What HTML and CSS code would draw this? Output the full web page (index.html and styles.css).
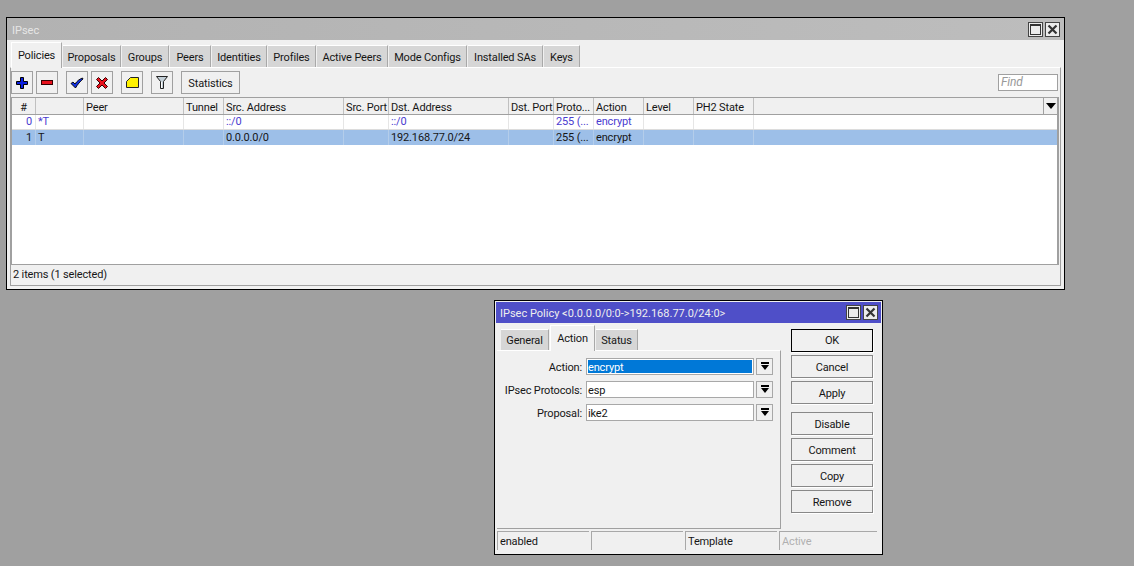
FILE: index.html
```html
<!DOCTYPE html>
<html lang="en">
<head>
<meta charset="utf-8">
<title>IPsec</title>
<link rel="stylesheet" href="styles.css">
</head>
<body>
<main class="desktop">
  <section class="window main-window">
    <header class="titlebar inactive">
      <span class="title">IPsec</span>
      <span class="win-btns">
        <span class="win-btn"><svg width="13" height="13" viewBox="0 0 13 13"><rect x="1.500" y="2.500" width="10" height="9" fill="none" stroke="#333"/><rect x="1" y="1" width="11" height="2" fill="#333"/></svg></span>
        <span class="win-btn"><svg width="13" height="13" viewBox="0 0 13 13"><path d="M2.500 2.500l8 8M10.500 2.500l-8 8" stroke="#333" stroke-width="2.200"/></svg></span>
      </span>
    </header>
    <nav class="tabs main-tabs">
      <span class="tab active t51">Policies</span>
      <span class="tab t58">Proposals</span>
      <span class="tab t47">Groups</span>
      <span class="tab t41">Peers</span>
      <span class="tab t55">Identities</span>
      <span class="tab t48">Profiles</span>
      <span class="tab t71">Active Peers</span>
      <span class="tab t78">Mode Configs</span>
      <span class="tab t75">Installed SAs</span>
      <span class="tab t36">Keys</span>
    </nav>
    <div class="panel">
      <div class="toolbar">
        <button class="tool"><svg width="14" height="14" viewBox="0 0 14 14"><path d="M5.500 1.500h3v4h4v3h-4v4h-3v-4h-4v-3h4z" fill="#0a1ee0" stroke="#000"/></svg></button>
        <button class="tool gap3"><svg width="14" height="14" viewBox="0 0 14 14"><rect x="1.500" y="4.500" width="11" height="4" fill="#e8101c" stroke="#300"/></svg></button>
        <button class="tool gap8"><svg width="14" height="14" viewBox="0 0 14 14"><path d="M1 7.500l2-1.500 2 2C7 5 9.500 3 12.500 2l.5 1C10 5.500 7.500 8.500 5.500 12z" fill="#1030e0" stroke="#000" stroke-width=".9"/></svg></button>
        <button class="tool gap3"><svg width="14" height="14" viewBox="0 0 14 14"><path d="M1.500 3.500l2-2 3.500 3.500 3.500-3.500 2 2-3.500 3.500 3.500 3.500-2 2-3.500-3.500-3.500 3.500-2-2 3.500-3.500z" fill="#e8101c" stroke="#300"/></svg></button>
        <button class="tool gap8"><svg width="15" height="14" viewBox="0 0 15 14"><path d="M5.500 1.500h8v10h-12v-6z" fill="#fff200" stroke="#222"/></svg></button>
        <button class="tool gap8"><svg width="14" height="15" viewBox="0 0 14 15"><path d="M1.500 1.500h11l-4 5v7h-3v-7z" fill="#c4d0d8" stroke="#222"/><path d="M6.500 7v6" stroke="#fff"/></svg></button>
        <button class="tool text-tool gap8">Statistics</button>
        <span class="find">Find</span>
      </div>
      <div class="table">
        <div class="row head">
          <span class="num">#</span><span></span><span>Peer</span><span>Tunnel</span><span>Src. Address</span><span>Src. Port</span><span>Dst. Address</span><span>Dst. Port</span><span>Proto...</span><span>Action</span><span>Level</span><span>PH2 State</span><span></span><span class="menu"><svg width="10" height="6" viewBox="0 0 10 6"><path d="M0 0h10L5 6z" fill="#000"/></svg></span>
        </div>
        <div class="row dyn">
          <span class="num">0</span><span>*T</span><span></span><span></span><span>::/0</span><span></span><span>::/0</span><span></span><span>255 (...</span><span>encrypt</span><span></span><span></span><span></span><span></span>
        </div>
        <div class="row sel">
          <span class="num">1</span><span>T</span><span></span><span></span><span>0.0.0.0/0</span><span></span><span>192.168.77.0/24</span><span></span><span>255 (...</span><span>encrypt</span><span></span><span></span><span></span><span></span>
        </div>
      </div>
      <div class="statusbar">2 items (1 selected)</div>
    </div>
  </section>

  <section class="window dialog">
    <header class="titlebar focused">
      <span class="title">IPsec Policy &lt;0.0.0.0/0:0-&gt;192.168.77.0/24:0&gt;</span>
      <span class="win-btns">
        <span class="win-btn"><svg width="13" height="13" viewBox="0 0 13 13"><rect x="1.500" y="2.500" width="10" height="9" fill="none" stroke="#333"/><rect x="1" y="1" width="11" height="2" fill="#333"/></svg></span>
        <span class="win-btn"><svg width="13" height="13" viewBox="0 0 13 13"><path d="M2.500 2.500l8 8M10.500 2.500l-8 8" stroke="#333" stroke-width="2.200"/></svg></span>
      </span>
    </header>
    <div class="dialog-body">
      <div class="dialog-left">
        <nav class="tabs dialog-tabs">
          <span class="tab t48">General</span>
          <span class="tab active t45">Action</span>
          <span class="tab t42">Status</span>
        </nav>
        <div class="form">
          <label class="field"><span class="label">Action:</span><span class="input selected"><span>encrypt</span></span><span class="drop"><svg width="10" height="9" viewBox="0 0 10 9"><path d="M1 0h8v2H1zM1 3h8L5 8z" fill="#000"/></svg></span></label>
          <label class="field"><span class="label">IPsec Protocols:</span><span class="input"><span>esp</span></span><span class="drop"><svg width="10" height="9" viewBox="0 0 10 9"><path d="M1 0h8v2H1zM1 3h8L5 8z" fill="#000"/></svg></span></label>
          <label class="field"><span class="label">Proposal:</span><span class="input"><span>ike2</span></span><span class="drop"><svg width="10" height="9" viewBox="0 0 10 9"><path d="M1 0h8v2H1zM1 3h8L5 8z" fill="#000"/></svg></span></label>
        </div>
      </div>
      <div class="actions">
        <button class="act default">OK</button>
        <button class="act">Cancel</button>
        <button class="act">Apply</button>
        <button class="act sep">Disable</button>
        <button class="act">Comment</button>
        <button class="act">Copy</button>
        <button class="act">Remove</button>
      </div>
    </div>
    <footer class="dialog-status">
      <span class="cell">enabled</span>
      <span class="cell"></span>
      <span class="cell">Template</span>
      <span class="cell muted">Active</span>
    </footer>
  </section>
</main>
</body>
</html>
```
FILE: styles.css
```css
* { box-sizing: border-box; }
html, body { margin: 0; padding: 0; }
body {
  font-family: Roboto, "Liberation Sans", Arial, sans-serif;
  font-size: 11px;
  letter-spacing: -0.15px;
  color: #161616;
}
.desktop {
  position: relative;
  width: 1134px;
  height: 566px;
  background: #a0a0a0;
  overflow: hidden;
}
.window {
  position: absolute;
  background: #f0f0f0;
  border: 1px solid #000;
  display: flex;
  flex-direction: column;
}
.main-window { left: 6px; top: 17px; width: 1059px; height: 273px; }
.dialog { left: 494px; top: 300px; width: 389px; height: 255px; padding: 1px; }

.titlebar {
  display: flex;
  align-items: center;
  justify-content: space-between;
  flex: none;
  letter-spacing: 0;
}
.title { margin-top: 2px; }
.titlebar.inactive {
  height: 22px;
  padding: 0 4px 0 5px;
  background: linear-gradient(90deg, #b2b2b2, #bdbdbd);
  color: #e6e6e6;
}
.titlebar.focused {
  height: 21px;
  padding: 0 3px 0 4px;
  background: #4f4fc8;
  color: #eee;
}
.win-btns { display: flex; gap: 2px; }
.win-btn {
  width: 15px;
  height: 15px;
  background: #ececec;
  border: 1px solid #444;
  display: flex;
  align-items: center;
  justify-content: center;
}

.tabs { display: flex; align-items: flex-end; gap: 1px; flex: none; position: relative; z-index: 1; }
.main-tabs { height: 27px; padding-left: 4px; }
.dialog-tabs { height: 27px; padding-left: 4px; }
.tab {
  height: 22px;
  padding-top: 2px;
  background: #d6d6d6;
  border-top: 1px solid #fff;
  border-right: 1px solid #a8a8a8;
  display: flex;
  align-items: center;
  justify-content: center;
  white-space: nowrap;
}
.dialog-tabs .tab { height: 21px; padding-top: 1px; }
.tabs .tab.active {
  height: 26px;
  margin-bottom: -1px;
  background: #f0f0f0;
  border-top: 1px solid #fff;
  border-left: 1px solid #fff;
  padding: 0;
}
.t36 { width: 36px; } .t41 { width: 41px; } .t42 { width: 42px; } .t45 { width: 45px; }
.t47 { width: 47px; } .t48 { width: 48px; } .t51 { width: 51px; } .t55 { width: 55px; }
.t58 { width: 58px; } .t71 { width: 71px; } .t75 { width: 75px; } .t78 { width: 78px; }

.panel {
  margin: 0 3px;
  height: 219px;
  border: 1px solid #a0a0a0;
  border-top: 1px solid #fff;
  display: flex;
  flex-direction: column;
}
.toolbar {
  height: 29px;
  display: flex;
  align-items: flex-start;
  padding-top: 3px;
  flex: none;
}
button { font: inherit; letter-spacing: inherit; color: inherit; padding: 0; background: #f0f0f0; }
.tool {
  width: 22px;
  height: 23px;
  border: 1px solid #a0a0a0;
  display: flex;
  align-items: center;
  justify-content: center;
}
.gap3 { margin-left: 3px; }
.gap8 { margin-left: 8px; }
.text-tool { width: 59px; padding-top: 2px; }
.find {
  margin: 3px 2px 0 auto;
  width: 60px;
  height: 17px;
  background: #fff;
  border: 1px solid #a0a0a0;
  color: #999;
  font-style: italic;
  font-size: 12px;
  line-height: 15px;
  padding-left: 2px;
}
.table {
  flex: 1;
  margin-right: 1px;
  background: #fff;
  border: 1px solid #a0a0a0;
  border-right-width: 2px;
}
.row {
  display: grid;
  grid-template-columns: 24px 48px 100px 40px 120px 45px 120px 45px 40px 50px 50px 60px 290px 1fr;
  height: 15px;
  line-height: 14px;
}
.row > span {
  padding-left: 2px;
  white-space: nowrap;
  overflow: hidden;
}
.row .num { text-align: right; padding: 0 3px 0 0; }
.head {
  height: 17px;
  line-height: 20px;
  background: #f0f0f0;
  border-bottom: 1px solid #a0a0a0;
}
.head > span { border-right: 1px solid #c0c0c0; }
.head .num { text-align: center; padding: 0; }
.row .menu {
  border-right: 0;
  border-left: 1px solid #a0a0a0;
  margin-left: -1px;
  padding: 0;
  display: flex;
  align-items: center;
  justify-content: center;
}
.head > span:nth-last-child(2) { border-right: 0; }
.dyn { color: #4a3cd0; line-height: 13px; }
.dyn > span, .sel > span { border-right: 1px solid #e6e6e6; }
.dyn > span:nth-child(n+13), .sel > span:nth-child(n+13) { border-right: 0; }
.dyn { border-bottom: 1px solid #dcdcdc; }
.sel { background: #9dbfe8; height: 15px; line-height: 16px; }
.sel > span { border-right-color: #b4cdea; }
.statusbar {
  flex: none;
  height: 20px;
  line-height: 19px;
  padding-left: 2px;
}

.dialog-body { display: flex; flex: 1; min-height: 0; padding-left: 1px; }
.dialog-left { width: 284px; display: flex; flex-direction: column; }
.form {
  flex: 1;
  margin-bottom: 2px;
  border-top: 1px solid #fff;
  border-right: 1px solid #a0a0a0;
  border-bottom: 1px solid #a0a0a0;
  padding-top: 7px;
  display: flex;
  flex-direction: column;
  gap: 6px;
}
.field { display: flex; align-items: center; height: 17px; }
.label { width: 85px; text-align: right; flex: none; white-space: nowrap; padding-top: 2px; }
.input {
  margin-left: 4px;
  width: 168px;
  height: 17px;
  background: #fff;
  border: 1px solid #a8a8a8;
  line-height: 16px;
  padding: 1px;
}
.input > span { display: block; height: 13px; }
.selected > span { background: #0078d7; color: #fff; }
.drop {
  margin-left: 2px;
  width: 17px;
  height: 17px;
  background: #f0f0f0;
  border: 1px solid #a8a8a8;
  display: flex;
  align-items: center;
  justify-content: center;
}
.actions {
  margin-left: 10px;
  padding-top: 6px;
  display: flex;
  flex-direction: column;
  gap: 3px;
}
.act {
  width: 82px;
  height: 23px;
  padding-top: 2px;
  border: 1px solid #888;
  box-shadow: 1px 1px 0 #fff;
}
.act.default { border-color: #000; padding-top: 0; }
.act.sep { margin-top: 5px; }
.dialog-status {
  flex: none;
  height: 22px;
  display: flex;
  gap: 2px;
  padding: 0 4px 3px 1px;
}
.cell {
  width: 92px;
  border-top: 1px solid #a8a8a8;
  border-left: 1px solid #a8a8a8;
  padding-left: 2px;
  line-height: 20px;
}
.cell:last-child { width: 98px; }
.muted { color: #b0b0b0; }
```
